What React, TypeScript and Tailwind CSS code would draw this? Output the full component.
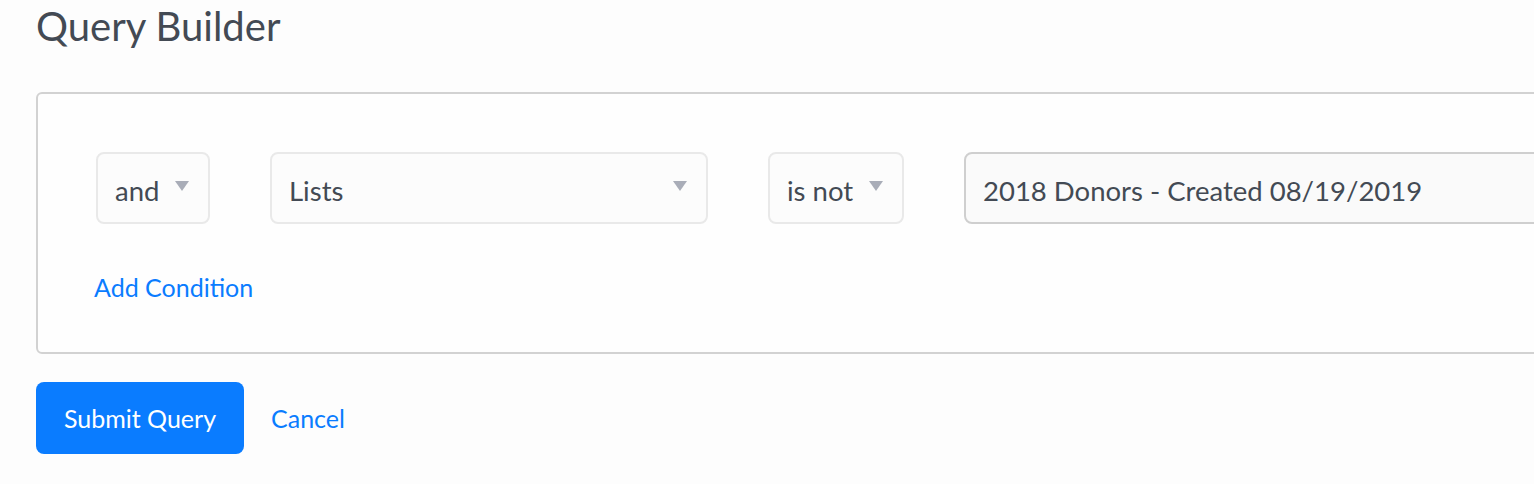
import React from "react";

const Caret = () => (
  <svg width="14" height="10" viewBox="0 0 14 10" className="shrink-0">
    <path d="M0 0 H14 L7 10 Z" fill="#a9adb8" />
  </svg>
);

const Select = ({ label, width }: { label: string; width: string }) => (
  <div
    className={`${width} h-[72px] shrink-0 flex items-center justify-between pl-[17px] pr-[19px] border-2 border-[#e9e9e9] rounded-[8px] bg-[#fcfcfc]`}
  >
    <span className="text-[27.5px] text-[#434a54] leading-none pt-[6px]">{label}</span>
    <span className="self-start mt-[27px]">
      <Caret />
    </span>
  </div>
);

export default function App() {
  return (
    <div
      className="min-h-[484px] w-[1534px] overflow-hidden bg-[#fdfdfd] pl-[36px] pt-[4px]"
      style={{ fontFamily: "Lato, 'Open Sans', sans-serif" }}
    >
      <h1 className="text-[40px] leading-[45px] text-[#434a54] font-normal">Query Builder</h1>

      <div className="mt-[43px] w-[1600px] h-[262px] border-2 border-[#d2d2d2] rounded-[6px] bg-[#fefefe] pl-[58px] pt-[58px]">
        <div className="flex gap-[60px]">
          <Select label="and" width="w-[114px]" />
          <Select label="Lists" width="w-[438px]" />
          <Select label="is not" width="w-[136px]" />
          <div className="w-[700px] h-[72px] shrink-0 flex items-center pl-[17px] border-2 border-[#cfcfcf] rounded-[8px] bg-[#fafafa]">
            <span className="text-[27.5px] text-[#434a54] leading-none pt-[6px]">
              2018 Donors - Created 08/19/2019
            </span>
          </div>
        </div>
        <button className="mt-[51px] -ml-[2px] text-[25px] leading-none text-[#0a7cff]">
          Add Condition
        </button>
      </div>

      <div className="mt-[28px] flex items-center gap-[27px]">
        <button className="w-[208px] h-[72px] rounded-[8px] bg-[#0a7cff] text-white text-[25px] leading-none">
          Submit Query
        </button>
        <button className="text-[25px] leading-none text-[#0a7cff]">Cancel</button>
      </div>
    </div>
  );
}
